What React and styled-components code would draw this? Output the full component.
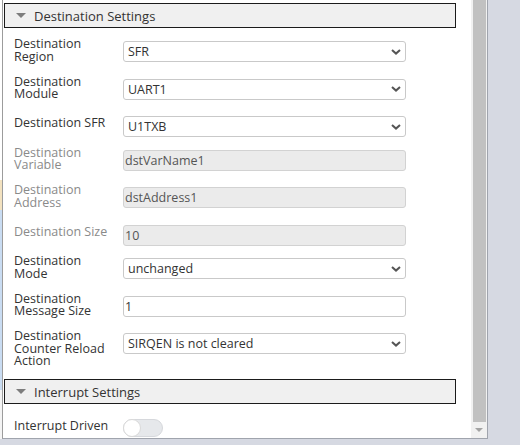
import React from "react";
import styled, { createGlobalStyle } from "styled-components";

const GlobalStyle = createGlobalStyle`
  html, body {
    margin: 0;
    padding: 0;
    background: #d6d9e2;
    overflow: hidden;
  }
  body {
    font-family: "Open Sans", "Noto Sans", sans-serif;
  }
`;

const Frame = styled.div`
  display: flex;
  width: 520px;
  height: 439px;
`;

// sliver of the table that sits behind the panel
const BackdropEdge = styled.div`
  width: 2px;
  background: linear-gradient(
    to bottom,
    #ffffff 0,
    #ffffff 180px,
    #f3e2c0 180px,
    #f3e2c0 210px,
    #c9dcf2 210px,
    #c9dcf2 390px,
    #f4f4f4 390px
  );
`;

const Panel = styled.div`
  display: flex;
  width: 486px;
  box-sizing: border-box;
  border-left: 1px solid #9c9c9c;
  border-right: 1px solid #a0a4ad;
  border-bottom: 1px solid #a0a4ad;
  background: #ffffff;
`;

const Content = styled.div`
  flex: 1;
  overflow: hidden;
  padding: 3px 15px 0 1px;
`;

const Scrollbar = styled.div`
  width: 16px;
  display: flex;
  flex-direction: column;
  align-items: center;
  background: #f1f1f1;
`;

const Thumb = styled.div`
  width: 13px;
  height: 422px;
  background: #c1c1c1;
`;

const ArrowDown = styled.div`
  margin-top: 6px;
  width: 0;
  height: 0;
  border-left: 4px solid transparent;
  border-right: 4px solid transparent;
  border-top: 4px solid #a3a3a3;
`;

const SectionHeader = styled.div`
  display: flex;
  align-items: center;
  gap: 8px;
  height: 25px;
  box-sizing: border-box;
  padding-left: 11px;
  border: 1px solid #1b1b1b;
  background: #f0f0f0;
  color: #333333;
  font-size: 13px;
  margin-top: ${(p) => p.$top || 0}px;
`;

const Caret = styled.span`
  width: 0;
  height: 0;
  border-left: 5px solid transparent;
  border-right: 5px solid transparent;
  border-top: 5px solid #7d7d7d;
`;

const Fields = styled.div`
  display: flex;
  flex-direction: column;
  gap: 12.5px;
  padding: ${(p) => p.$top ?? 10}px 0 0 10px;
`;

const Row = styled.div`
  display: flex;
  align-items: flex-start;
`;

const Label = styled.div`
  width: 109px;
  min-height: 21px;
  padding-right: 11px;
  box-sizing: border-box;
  flex-shrink: 0;
  display: flex;
  align-items: center;
  font-size: 12.5px;
  line-height: 12.5px;
  color: ${(p) => (p.$disabled ? "#8a8a8a" : "#333333")};
`;

const Control = styled.div`
  width: 283px;
  height: 21px;
  margin: 3px 0 -3px;
  box-sizing: border-box;
  display: flex;
  align-items: center;
  justify-content: space-between;
  padding: 0 4px 0 ${(p) => (p.$select ? 4 : 1)}px;
  border: 1px solid ${(p) => (p.$disabled ? "#d2d2d2" : "#c9c9c9")};
  border-radius: 3px;
  background: ${(p) => (p.$disabled ? "#ebebeb" : "#ffffff")};
  color: ${(p) => (p.$disabled ? "#555555" : "#333333")};
  font-size: 12.5px;
  white-space: nowrap;
`;

const Toggle = styled.div`
  width: 40px;
  height: 18px;
  margin-top: 3px;
  box-sizing: border-box;
  border: 1px solid #d6d8dc;
  border-radius: 9px;
  background: #e6e8eb;
  display: flex;
  align-items: center;
`;

const Knob = styled.div`
  width: 18px;
  height: 18px;
  margin-left: -1px;
  box-sizing: border-box;
  border-radius: 50%;
  border: 1px solid #d9d9d9;
  background: #ffffff;
`;

const Chevron = () => (
  <svg width="10" height="6" viewBox="0 0 10 6">
    <path d="M1 1 L5 4.6 L9 1" fill="none" stroke="#555" strokeWidth="2" />
  </svg>
);

const fields = [
  { label: "Destination Region", value: "SFR", select: true },
  { label: "Destination Module", value: "UART1", select: true },
  { label: "Destination SFR", value: "U1TXB", select: true },
  { label: "Destination Variable", value: "dstVarName1", disabled: true },
  { label: "Destination Address", value: "dstAddress1", disabled: true },
  { label: "Destination Size", value: "10", disabled: true },
  { label: "Destination Mode", value: "unchanged", select: true },
  { label: "Destination Message Size", value: "1" },
  { label: "Destination Counter Reload Action", value: "SIRQEN is not cleared", select: true },
];

export default function App() {
  return (
    <>
      <GlobalStyle />
      <Frame>
        <BackdropEdge />
        <Panel>
          <Content>
            <SectionHeader>
              <Caret />
              Destination Settings
            </SectionHeader>
            <Fields>
              {fields.map((f) => (
                <Row key={f.label}>
                  <Label $disabled={f.disabled}>{f.label}</Label>
                  <Control $select={f.select} $disabled={f.disabled}>
                    <span>{f.value}</span>
                    {f.select && <Chevron />}
                  </Control>
                </Row>
              ))}
            </Fields>
            <SectionHeader $top={11.5}>
              <Caret />
              Interrupt Settings
            </SectionHeader>
            <Fields $top={11.5}>
              <Row>
                <Label>Interrupt Driven</Label>
                <Toggle>
                  <Knob />
                </Toggle>
              </Row>
            </Fields>
          </Content>
          <Scrollbar>
            <Thumb />
            <ArrowDown />
          </Scrollbar>
        </Panel>
      </Frame>
    </>
  );
}
